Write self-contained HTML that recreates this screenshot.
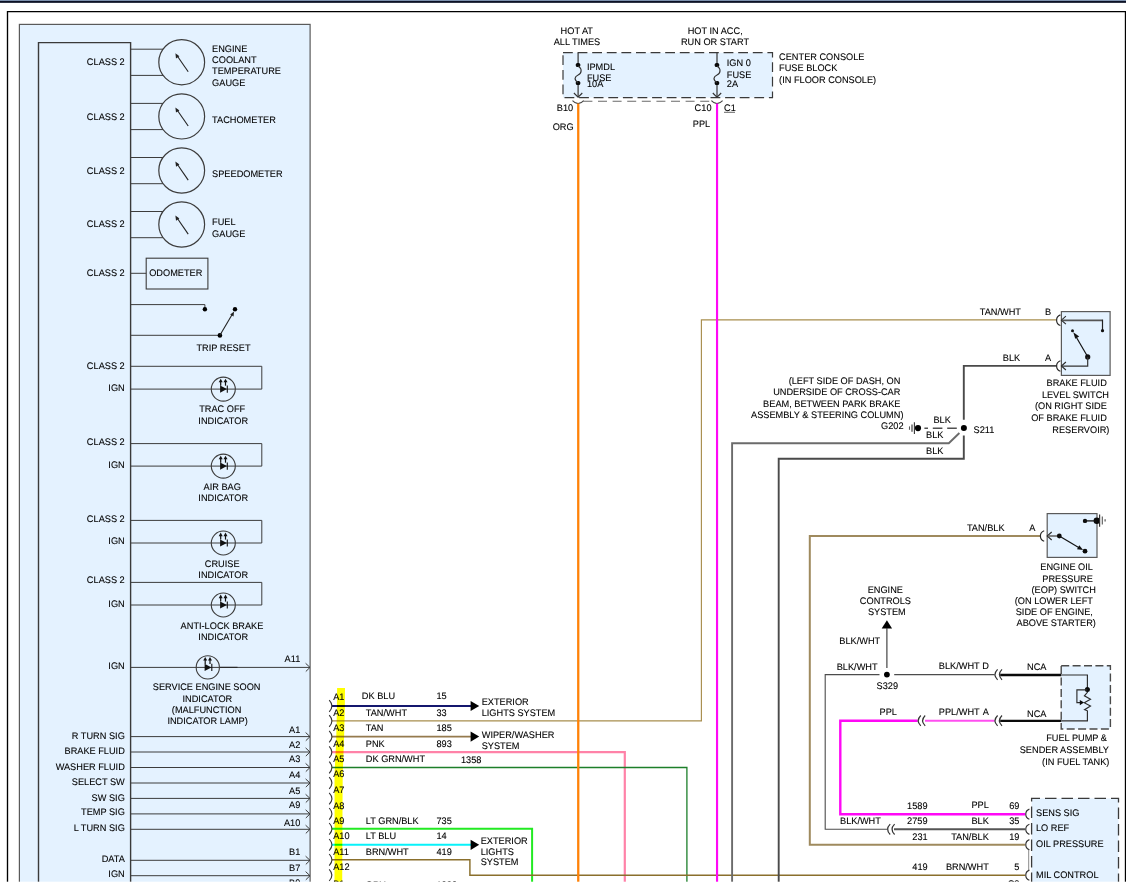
<!DOCTYPE html>
<html lang="en">
<head>
<meta charset="utf-8">
<title>Instrument Cluster Wiring Diagram</title>
<style>
html,body{margin:0;padding:0;background:#fff;}
body{width:1126px;height:884px;overflow:hidden;position:relative;}
svg{display:block;position:absolute;left:0;top:0;}
text{text-rendering:geometricPrecision;font-family:"Liberation Sans",sans-serif;font-size:9.5px;fill:#000;stroke:#000;stroke-width:0.1px;}
</style>
</head>
<body>
<svg width="1126" height="884" viewBox="0 0 1126 884">

<rect x="0" y="0" width="1126" height="884" fill="#fff"/>
<rect x="0" y="0" width="1126" height="1" fill="#7d91ae"/>
<rect x="0" y="1" width="1126" height="1.85" fill="#0c1226"/>
<path d="M7.5 884 V11.55 H1125.5 V884" stroke="#000" stroke-width="1.35" fill="none"/>
<rect x="19.4" y="24.4" width="290.7" height="870" fill="#e4f2ff" stroke="#5a5a5a" stroke-width="1.2"/>
<path d="M38.5 884 V42.6 H130.6 V884" stroke="#3a3a3a" stroke-width="1.4" fill="none"/>
<line x1="130.6" y1="49.2" x2="163.0" y2="49.2" stroke="#3c3c3c" stroke-width="1"/>
<line x1="130.6" y1="75.4" x2="163.0" y2="75.4" stroke="#3c3c3c" stroke-width="1"/>
<ellipse cx="181.7" cy="62.2" rx="22.9" ry="22.6" fill="none" stroke="#3c3c3c" stroke-width="1.2"/>
<line x1="188.2" y1="71.8" x2="176.59999999999997" y2="55.0" stroke="#222" stroke-width="1.1"/>
<polygon points="175.39999999999998,53.2 176.0,58.4 179.4,56.3" fill="#222"/>
<line x1="130.6" y1="103.4" x2="163.0" y2="103.4" stroke="#3c3c3c" stroke-width="1"/>
<line x1="130.6" y1="129.6" x2="163.0" y2="129.6" stroke="#3c3c3c" stroke-width="1"/>
<ellipse cx="181.7" cy="116.4" rx="22.9" ry="22.6" fill="none" stroke="#3c3c3c" stroke-width="1.2"/>
<line x1="188.2" y1="126.0" x2="176.59999999999997" y2="109.2" stroke="#222" stroke-width="1.1"/>
<polygon points="175.39999999999998,107.4 176.0,112.6 179.4,110.5" fill="#222"/>
<line x1="130.6" y1="157.5" x2="163.0" y2="157.5" stroke="#3c3c3c" stroke-width="1"/>
<line x1="130.6" y1="183.7" x2="163.0" y2="183.7" stroke="#3c3c3c" stroke-width="1"/>
<ellipse cx="181.7" cy="170.5" rx="22.9" ry="22.6" fill="none" stroke="#3c3c3c" stroke-width="1.2"/>
<line x1="188.2" y1="180.1" x2="176.59999999999997" y2="163.3" stroke="#222" stroke-width="1.1"/>
<polygon points="175.39999999999998,161.5 176.0,166.7 179.4,164.6" fill="#222"/>
<line x1="130.6" y1="211.5" x2="163.0" y2="211.5" stroke="#3c3c3c" stroke-width="1"/>
<line x1="130.6" y1="237.7" x2="163.0" y2="237.7" stroke="#3c3c3c" stroke-width="1"/>
<ellipse cx="181.7" cy="224.5" rx="22.9" ry="22.6" fill="none" stroke="#3c3c3c" stroke-width="1.2"/>
<line x1="188.2" y1="234.1" x2="176.59999999999997" y2="217.3" stroke="#222" stroke-width="1.1"/>
<polygon points="175.39999999999998,215.5 176.0,220.7 179.4,218.6" fill="#222"/>
<text transform="translate(124.7 64.8) scale(0.968 1)" text-anchor="end">CLASS 2</text>
<text transform="translate(124.7 119.6) scale(0.968 1)" text-anchor="end">CLASS 2</text>
<text transform="translate(124.7 173.9) scale(0.968 1)" text-anchor="end">CLASS 2</text>
<text transform="translate(124.7 226.6) scale(0.968 1)" text-anchor="end">CLASS 2</text>
<text transform="translate(124.7 276.1) scale(0.968 1)" text-anchor="end">CLASS 2</text>
<text transform="translate(124.7 368.9) scale(0.968 1)" text-anchor="end">CLASS 2</text>
<text transform="translate(124.7 444.6) scale(0.968 1)" text-anchor="end">CLASS 2</text>
<text transform="translate(124.7 521.6) scale(0.968 1)" text-anchor="end">CLASS 2</text>
<text transform="translate(124.7 582.9) scale(0.968 1)" text-anchor="end">CLASS 2</text>
<text transform="translate(124.7 391.1) scale(0.968 1)" text-anchor="end">IGN</text>
<text transform="translate(124.7 467.9) scale(0.968 1)" text-anchor="end">IGN</text>
<text transform="translate(124.7 543.8) scale(0.968 1)" text-anchor="end">IGN</text>
<text transform="translate(124.7 606.8) scale(0.968 1)" text-anchor="end">IGN</text>
<text transform="translate(124.7 668.7) scale(0.968 1)" text-anchor="end">IGN</text>
<text transform="translate(124.7 876.8) scale(0.968 1)" text-anchor="end">IGN</text>
<text transform="translate(212.1 51.8) scale(0.968 1)">ENGINE</text>
<text transform="translate(212.1 62.7) scale(0.968 1)">COOLANT</text>
<text transform="translate(212.1 73.7) scale(0.968 1)">TEMPERATURE</text>
<text transform="translate(212.1 85.7) scale(0.968 1)">GAUGE</text>
<text transform="translate(212.1 122.8) scale(0.968 1)">TACHOMETER</text>
<text transform="translate(212.1 176.8) scale(0.968 1)">SPEEDOMETER</text>
<text transform="translate(212.1 224.9) scale(0.968 1)">FUEL</text>
<text transform="translate(212.1 236.8) scale(0.968 1)">GAUGE</text>
<line x1="130.6" y1="273.3" x2="146.2" y2="273.3" stroke="#3c3c3c" stroke-width="1"/>
<rect x="146.2" y="258.2" width="61.7" height="30.8" fill="none" stroke="#3c3c3c" stroke-width="1.1"/>
<text transform="translate(149.2 276.1) scale(0.968 1)">ODOMETER</text>
<path d="M130.6 304.6 H204.9 V309" stroke="#3c3c3c" stroke-width="1" fill="none"/>
<circle cx="204.9" cy="309.3" r="2.2" fill="#000"/>
<circle cx="235.0" cy="309.3" r="2.2" fill="#000"/>
<line x1="130.6" y1="335.3" x2="219.9" y2="335.3" stroke="#3c3c3c" stroke-width="1"/>
<circle cx="219.9" cy="335.4" r="2.3" fill="#000"/>
<line x1="219.9" y1="335.3" x2="232.6" y2="313.8" stroke="#222" stroke-width="1.1"/>
<polygon points="234.0,311.4 233.6,316.6 230.2,314.6" fill="#222"/>
<text transform="translate(223.5 350.8) scale(0.968 1)" text-anchor="middle">TRIP RESET</text>
<path d="M130.6 366.3 H261.8 V389.1 H130.6" stroke="#3c3c3c" stroke-width="1" fill="none"/>
<circle cx="223.3" cy="389.1" r="12" fill="none" stroke="#3c3c3c" stroke-width="1.1"/>
<polygon points="220.1,385.5 220.1,392.7 226.9,389.1" fill="#111"/>
<line x1="227.3" y1="385.5" x2="227.3" y2="392.70000000000005" stroke="#111" stroke-width="1.1"/>
<line x1="220.70000000000002" y1="385.70000000000005" x2="220.70000000000002" y2="381.1" stroke="#111" stroke-width="1.2"/>
<polygon points="220.7,378.7 218.7,382.3 222.7,382.3" fill="#111"/>
<line x1="225.5" y1="385.70000000000005" x2="225.5" y2="381.1" stroke="#111" stroke-width="1.2"/>
<polygon points="225.5,378.7 223.5,382.3 227.5,382.3" fill="#111"/>
<path d="M130.6 443.6 H261.8 V466.1 H130.6" stroke="#3c3c3c" stroke-width="1" fill="none"/>
<circle cx="223.3" cy="466.1" r="12" fill="none" stroke="#3c3c3c" stroke-width="1.1"/>
<polygon points="220.1,462.5 220.1,469.7 226.9,466.1" fill="#111"/>
<line x1="227.3" y1="462.5" x2="227.3" y2="469.70000000000005" stroke="#111" stroke-width="1.1"/>
<line x1="220.70000000000002" y1="462.70000000000005" x2="220.70000000000002" y2="458.1" stroke="#111" stroke-width="1.2"/>
<polygon points="220.7,455.7 218.7,459.3 222.7,459.3" fill="#111"/>
<line x1="225.5" y1="462.70000000000005" x2="225.5" y2="458.1" stroke="#111" stroke-width="1.2"/>
<polygon points="225.5,455.7 223.5,459.3 227.5,459.3" fill="#111"/>
<path d="M130.6 520.4 H261.8 V543.0 H130.6" stroke="#3c3c3c" stroke-width="1" fill="none"/>
<circle cx="223.3" cy="543.0" r="12" fill="none" stroke="#3c3c3c" stroke-width="1.1"/>
<polygon points="220.1,539.4 220.1,546.6 226.9,543.0" fill="#111"/>
<line x1="227.3" y1="539.4" x2="227.3" y2="546.6" stroke="#111" stroke-width="1.1"/>
<line x1="220.70000000000002" y1="539.6" x2="220.70000000000002" y2="535.0" stroke="#111" stroke-width="1.2"/>
<polygon points="220.7,532.6 218.7,536.2 222.7,536.2" fill="#111"/>
<line x1="225.5" y1="539.6" x2="225.5" y2="535.0" stroke="#111" stroke-width="1.2"/>
<polygon points="225.5,532.6 223.5,536.2 227.5,536.2" fill="#111"/>
<path d="M130.6 582.4 H261.8 V605.0 H130.6" stroke="#3c3c3c" stroke-width="1" fill="none"/>
<circle cx="223.3" cy="605.0" r="12" fill="none" stroke="#3c3c3c" stroke-width="1.1"/>
<polygon points="220.1,601.4 220.1,608.6 226.9,605.0" fill="#111"/>
<line x1="227.3" y1="601.4" x2="227.3" y2="608.6" stroke="#111" stroke-width="1.1"/>
<line x1="220.70000000000002" y1="601.6" x2="220.70000000000002" y2="597.0" stroke="#111" stroke-width="1.2"/>
<polygon points="220.7,594.6 218.7,598.2 222.7,598.2" fill="#111"/>
<line x1="225.5" y1="601.6" x2="225.5" y2="597.0" stroke="#111" stroke-width="1.2"/>
<polygon points="225.5,594.6 223.5,598.2 227.5,598.2" fill="#111"/>
<text transform="translate(222.2 411.6) scale(0.968 1)" text-anchor="middle">TRAC OFF</text>
<text transform="translate(223.2 423.7) scale(0.968 1)" text-anchor="middle">INDICATOR</text>
<text transform="translate(222.2 489.8) scale(0.968 1)" text-anchor="middle">AIR BAG</text>
<text transform="translate(223.2 500.7) scale(0.968 1)" text-anchor="middle">INDICATOR</text>
<text transform="translate(222.2 566.7) scale(0.968 1)" text-anchor="middle">CRUISE</text>
<text transform="translate(223.2 577.6) scale(0.968 1)" text-anchor="middle">INDICATOR</text>
<text transform="translate(222.0 628.9) scale(0.968 1)" text-anchor="middle">ANTI-LOCK BRAKE</text>
<text transform="translate(223.2 639.8) scale(0.968 1)" text-anchor="middle">INDICATOR</text>
<line x1="130.6" y1="667.4" x2="310" y2="667.4" stroke="#3c3c3c" stroke-width="1"/>
<path d="M305.6 663.3 L310 667.4 L305.8 671.5" stroke="#3c3c3c" stroke-width="1" fill="none"/>
<text transform="translate(300.3 661.6) scale(0.968 1)" text-anchor="end">A11</text>
<line x1="220" y1="667.4" x2="237.5" y2="667.4" stroke="#2a2a2a" stroke-width="1.2"/>
<circle cx="207.8" cy="667.4" r="11.6" fill="none" stroke="#3c3c3c" stroke-width="1.1"/>
<polygon points="204.6,663.8 204.6,671.0 211.4,667.4" fill="#111"/>
<line x1="211.8" y1="663.8" x2="211.8" y2="671.0" stroke="#111" stroke-width="1.1"/>
<line x1="205.20000000000002" y1="664.0" x2="205.20000000000002" y2="659.4" stroke="#111" stroke-width="1.2"/>
<polygon points="205.2,657.0 203.2,660.6 207.2,660.6" fill="#111"/>
<line x1="210.0" y1="664.0" x2="210.0" y2="659.4" stroke="#111" stroke-width="1.2"/>
<polygon points="210.0,657.0 208.0,660.6 212.0,660.6" fill="#111"/>
<text transform="translate(206.6 689.7) scale(0.968 1)" text-anchor="middle">SERVICE ENGINE SOON</text>
<text transform="translate(207.4 702.0) scale(0.968 1)" text-anchor="middle">INDICATOR</text>
<text transform="translate(206.6 713.0) scale(0.968 1)" text-anchor="middle">(MALFUNCTION</text>
<text transform="translate(207.6 724.1) scale(0.968 1)" text-anchor="middle">INDICATOR LAMP)</text>
<line x1="130.6" y1="736.6" x2="310" y2="736.6" stroke="#3c3c3c" stroke-width="1"/>
<path d="M305.6 732.5 L310 736.6 L305.8 740.7" stroke="#3c3c3c" stroke-width="1" fill="none"/>
<text transform="translate(300.3 733.3) scale(0.968 1)" text-anchor="end">A1</text>
<text transform="translate(124.8 738.5) scale(0.968 1)" text-anchor="end">R TURN SIG</text>
<line x1="130.6" y1="752.0" x2="310" y2="752.0" stroke="#3c3c3c" stroke-width="1"/>
<path d="M305.6 747.9 L310 752.0 L305.8 756.1" stroke="#3c3c3c" stroke-width="1" fill="none"/>
<text transform="translate(300.3 747.7) scale(0.968 1)" text-anchor="end">A2</text>
<text transform="translate(124.8 753.8) scale(0.968 1)" text-anchor="end">BRAKE FLUID</text>
<line x1="130.6" y1="767.5" x2="310" y2="767.5" stroke="#3c3c3c" stroke-width="1"/>
<path d="M305.6 763.4 L310 767.5 L305.8 771.6" stroke="#3c3c3c" stroke-width="1" fill="none"/>
<text transform="translate(300.3 762.4) scale(0.968 1)" text-anchor="end">A3</text>
<text transform="translate(124.8 769.7) scale(0.968 1)" text-anchor="end">WASHER FLUID</text>
<line x1="130.6" y1="783.0" x2="310" y2="783.0" stroke="#3c3c3c" stroke-width="1"/>
<path d="M305.6 778.9 L310 783.0 L305.8 787.1" stroke="#3c3c3c" stroke-width="1" fill="none"/>
<text transform="translate(300.3 778.0) scale(0.968 1)" text-anchor="end">A4</text>
<text transform="translate(124.8 784.9) scale(0.968 1)" text-anchor="end">SELECT SW</text>
<line x1="130.6" y1="798.4" x2="310" y2="798.4" stroke="#3c3c3c" stroke-width="1"/>
<path d="M305.6 794.3 L310 798.4 L305.8 802.5" stroke="#3c3c3c" stroke-width="1" fill="none"/>
<text transform="translate(300.3 794.0) scale(0.968 1)" text-anchor="end">A5</text>
<text transform="translate(124.8 800.6) scale(0.968 1)" text-anchor="end">SW SIG</text>
<line x1="130.6" y1="813.9" x2="310" y2="813.9" stroke="#3c3c3c" stroke-width="1"/>
<path d="M305.6 809.8 L310 813.9 L305.8 818.0" stroke="#3c3c3c" stroke-width="1" fill="none"/>
<text transform="translate(300.3 808.4) scale(0.968 1)" text-anchor="end">A9</text>
<text transform="translate(124.8 814.8) scale(0.968 1)" text-anchor="end">TEMP SIG</text>
<line x1="130.6" y1="829.3" x2="310" y2="829.3" stroke="#3c3c3c" stroke-width="1"/>
<path d="M305.6 825.1999999999999 L310 829.3 L305.8 833.4" stroke="#3c3c3c" stroke-width="1" fill="none"/>
<text transform="translate(300.3 825.5) scale(0.968 1)" text-anchor="end">A10</text>
<text transform="translate(124.8 831.0) scale(0.968 1)" text-anchor="end">L TURN SIG</text>
<line x1="130.6" y1="860.3" x2="310" y2="860.3" stroke="#3c3c3c" stroke-width="1"/>
<path d="M305.6 856.1999999999999 L310 860.3 L305.8 864.4" stroke="#3c3c3c" stroke-width="1" fill="none"/>
<text transform="translate(300.3 854.7) scale(0.968 1)" text-anchor="end">B1</text>
<text transform="translate(124.8 861.6) scale(0.968 1)" text-anchor="end">DATA</text>
<line x1="130.6" y1="875.7" x2="310" y2="875.7" stroke="#3c3c3c" stroke-width="1"/>
<path d="M305.6 871.6 L310 875.7 L305.8 879.8000000000001" stroke="#3c3c3c" stroke-width="1" fill="none"/>
<text transform="translate(300.3 870.5) scale(0.968 1)" text-anchor="end">B7</text>
<text transform="translate(300.3 886.4) scale(0.968 1)" text-anchor="end">B9</text>
<rect x="563" y="52.7" width="209.5" height="44.9" fill="#e4f2ff"/>
<rect x="563" y="52.7" width="209.5" height="44.9" fill="none" stroke="#3a3a3a" stroke-width="1.2" stroke-dasharray="9.8 4.8"/>
<line x1="583.4" y1="101.3" x2="711.6" y2="101.3" stroke="#6a6a6a" stroke-width="1.1" stroke-dasharray="9 5.6"/>
<text transform="translate(576.8 33.5) scale(0.968 1)" text-anchor="middle">HOT AT</text>
<text transform="translate(576.9 44.9) scale(0.968 1)" text-anchor="middle">ALL TIMES</text>
<text transform="translate(715.2 33.5) scale(0.968 1)" text-anchor="middle">HOT IN ACC,</text>
<text transform="translate(715.0 44.9) scale(0.968 1)" text-anchor="middle">RUN OR START</text>
<text transform="translate(779.1 59.7) scale(0.968 1)">CENTER CONSOLE</text>
<text transform="translate(779.1 70.5) scale(0.968 1)">FUSE BLOCK</text>
<text transform="translate(779.1 82.9) scale(0.968 1)">(IN FLOOR CONSOLE)</text>
<line x1="578.1" y1="52.7" x2="578.1" y2="65" stroke="#333" stroke-width="1.2"/>
<line x1="578.1" y1="83" x2="578.1" y2="97" stroke="#333" stroke-width="1.2"/>
<rect x="575.8" y="62.9" width="4.5" height="4.2" rx="1.6" fill="#0a0a0a"/>
<rect x="575.8" y="80.9" width="4.5" height="4.2" rx="1.6" fill="#0a0a0a"/>
<path d="M578.1 66 C582.6 69,581.6 73.5,578.1 75 C574.6 76.5,573.6 80,578.1 82.5" stroke="#333" stroke-width="1.2" fill="none"/>
<path d="M573.9 93.0 L578.1 97.2 L582.3 93.0" stroke="#333" stroke-width="1.1" fill="none"/>
<path d="M572.5 100.6 Q578.1 106.6 583.7 100.6" stroke="#444" stroke-width="1.1" fill="none"/>
<line x1="717.0" y1="52.7" x2="717.0" y2="65" stroke="#333" stroke-width="1.2"/>
<line x1="717.0" y1="83" x2="717.0" y2="97" stroke="#333" stroke-width="1.2"/>
<rect x="714.7" y="62.9" width="4.5" height="4.2" rx="1.6" fill="#0a0a0a"/>
<rect x="714.7" y="80.9" width="4.5" height="4.2" rx="1.6" fill="#0a0a0a"/>
<path d="M717.0 66 C721.5 69,720.5 73.5,717.0 75 C713.5 76.5,712.5 80,717.0 82.5" stroke="#333" stroke-width="1.2" fill="none"/>
<path d="M712.8 93.0 L717.0 97.2 L721.2 93.0" stroke="#333" stroke-width="1.1" fill="none"/>
<path d="M711.4 100.6 Q717.0 106.6 722.6 100.6" stroke="#444" stroke-width="1.1" fill="none"/>
<text transform="translate(586.9 70.0) scale(0.968 1)">IPMDL</text>
<text transform="translate(586.9 81.2) scale(0.968 1)">FUSE</text>
<text transform="translate(586.9 86.9) scale(0.968 1)">10A</text>
<text transform="translate(726.8 65.6) scale(0.968 1)">IGN 0</text>
<text transform="translate(726.8 77.5) scale(0.968 1)">FUSE</text>
<text transform="translate(726.8 86.6) scale(0.968 1)">2A</text>
<text transform="translate(573.2 111.0) scale(0.968 1)" text-anchor="end">B10</text>
<text transform="translate(573.6 129.6) scale(0.968 1)" text-anchor="end">ORG</text>
<text transform="translate(711.5 111.0) scale(0.968 1)" text-anchor="end">C10</text>
<text transform="translate(724.0 110.5) scale(0.968 1)">C1</text>
<line x1="724.0" y1="112.3" x2="735.0" y2="112.3" stroke="#555" stroke-width="0.9"/>
<text transform="translate(710.2 126.8) scale(0.968 1)" text-anchor="end">PPL</text>
<path d="M331.8 720.8 H701.4 V319.8 H1056.6" stroke="#a88e4e" stroke-width="1.15" fill="none"/>
<path d="M331.8 752.1 H624.8 V884" stroke="#ff82a8" stroke-width="2.2" fill="none"/>
<path d="M331.8 767.5 H686.9 V884" stroke="#1d7f2a" stroke-width="1.3" fill="none"/>
<path d="M331.8 828.8 H532.1 V884" stroke="#22ea22" stroke-width="2.0" fill="none"/>
<path d="M331.8 859.8 H469.9 V875.2 H1025.2" stroke="#8a6f2c" stroke-width="1.45" fill="none"/>
<line x1="331.8" y1="706.0" x2="472" y2="706.0" stroke="#14176e" stroke-width="2.0"/>
<polygon points="470.6,700.9 479.2,706.0 470.6,711.1" fill="#000"/>
<line x1="331.8" y1="736.6" x2="472" y2="736.6" stroke="#957a4e" stroke-width="1.9"/>
<polygon points="470.6,731.5 479.2,736.6 470.6,741.7" fill="#000"/>
<line x1="331.8" y1="844.8" x2="472" y2="844.8" stroke="#08f2fa" stroke-width="2.0"/>
<polygon points="470.6,839.7 479.2,844.8 470.6,849.9" fill="#000"/>
<line x1="578.25" y1="103.6" x2="578.25" y2="884" stroke="#ff8208" stroke-width="2.3"/>
<line x1="717.05" y1="103.6" x2="717.05" y2="884" stroke="#ff08f6" stroke-width="2.15"/>
<path d="M959.4 433.0 L948.8 443.3 H732.1 V884" stroke="#6b6b6b" stroke-width="1.9" fill="none"/>
<path d="M1056.6 365.9 H963.8 V419.8 M963.8 435.4 V458.8 H778.7 V884" stroke="#4a4a4a" stroke-width="1.9" fill="none"/>
<path d="M1040.6 536.0 H809.8 V844.7 H1025.2" stroke="#9f8a5e" stroke-width="2.0" fill="none"/>
<path d="M879.5 674.6 H825.2 V829.3 H887" stroke="#4c4c4c" stroke-width="1.1" fill="none"/>
<line x1="894" y1="829.3" x2="1025.2" y2="829.3" stroke="#555" stroke-width="2.0"/>
<line x1="894.2" y1="674.6" x2="994.6" y2="674.6" stroke="#4c4c4c" stroke-width="1.1"/>
<path d="M917.6 720.7 H840.3 V814.2 H1025.2" stroke="#ff08f6" stroke-width="2.4" fill="none"/>
<line x1="925" y1="720.7" x2="994.6" y2="720.7" stroke="#ff4ff0" stroke-width="1.9"/>
<polygon points="337.1,688 345.0,688 344.8,710 344.0,740 342.7,775 342.4,830 342.2,884 334.5,884 334.6,830 334.5,775 336.2,740 336.9,710" fill="#ffff00" style="mix-blend-mode:multiply"/>
<path d="M329.2 700.2 Q334.6 706.0 329.2 711.8" stroke="#333" stroke-width="1.1" fill="none"/>
<text transform="translate(333.2 699.5) scale(0.968 1)">A1</text>
<path d="M329.2 715.2 Q334.6 721.0 329.2 726.8" stroke="#333" stroke-width="1.1" fill="none"/>
<text transform="translate(333.2 716.0) scale(0.968 1)">A2</text>
<path d="M329.2 730.8 Q334.6 736.6 329.2 742.4" stroke="#333" stroke-width="1.1" fill="none"/>
<text transform="translate(333.2 731.0) scale(0.968 1)">A3</text>
<path d="M329.2 746.3 Q334.6 752.1 329.2 757.9" stroke="#333" stroke-width="1.1" fill="none"/>
<text transform="translate(333.2 746.7) scale(0.968 1)">A4</text>
<path d="M329.2 761.7 Q334.6 767.5 329.2 773.3" stroke="#333" stroke-width="1.1" fill="none"/>
<text transform="translate(333.2 761.6) scale(0.968 1)">A5</text>
<path d="M329.2 777.2 Q334.6 783.0 329.2 788.8" stroke="#333" stroke-width="1.1" fill="none"/>
<text transform="translate(333.2 777.4) scale(0.968 1)">A6</text>
<path d="M329.2 792.8 Q334.6 798.6 329.2 804.4" stroke="#333" stroke-width="1.1" fill="none"/>
<text transform="translate(333.2 792.7) scale(0.968 1)">A7</text>
<path d="M329.2 808.0 Q334.6 813.8 329.2 819.6" stroke="#333" stroke-width="1.1" fill="none"/>
<text transform="translate(333.2 808.5) scale(0.968 1)">A8</text>
<path d="M329.2 823.0 Q334.6 828.8 329.2 834.6" stroke="#333" stroke-width="1.1" fill="none"/>
<text transform="translate(333.2 823.7) scale(0.968 1)">A9</text>
<path d="M329.2 839.0 Q334.6 844.8 329.2 850.6" stroke="#333" stroke-width="1.1" fill="none"/>
<text transform="translate(333.2 838.7) scale(0.968 1)">A10</text>
<path d="M329.2 854.0 Q334.6 859.8 329.2 865.6" stroke="#333" stroke-width="1.1" fill="none"/>
<text transform="translate(333.2 855.3) scale(0.968 1)">A11</text>
<path d="M329.2 869.4 Q334.6 875.2 329.2 881.0" stroke="#333" stroke-width="1.1" fill="none"/>
<text transform="translate(333.2 870.2) scale(0.968 1)">A12</text>
<text transform="translate(333.2 887.2) scale(0.968 1)">B1</text>
<text transform="translate(361.8 698.7) scale(0.968 1)">DK BLU</text>
<text transform="translate(436.4 699.4) scale(0.968 1)">15</text>
<text transform="translate(365.8 716.0) scale(0.968 1)">TAN/WHT</text>
<text transform="translate(436.4 716.0) scale(0.968 1)">33</text>
<text transform="translate(365.8 731.0) scale(0.968 1)">TAN</text>
<text transform="translate(436.4 731.0) scale(0.968 1)">185</text>
<text transform="translate(365.8 746.7) scale(0.968 1)">PNK</text>
<text transform="translate(436.4 746.7) scale(0.968 1)">893</text>
<text transform="translate(365.8 761.6) scale(0.968 1)">DK GRN/WHT</text>
<text transform="translate(461.0 762.6) scale(0.968 1)">1358</text>
<text transform="translate(365.8 823.7) scale(0.968 1)">LT GRN/BLK</text>
<text transform="translate(436.4 823.7) scale(0.968 1)">735</text>
<text transform="translate(365.8 838.7) scale(0.968 1)">LT BLU</text>
<text transform="translate(436.4 838.7) scale(0.968 1)">14</text>
<text transform="translate(365.8 855.3) scale(0.968 1)">BRN/WHT</text>
<text transform="translate(436.4 855.3) scale(0.968 1)">419</text>
<text transform="translate(365.8 887.6) scale(0.968 1)">GRY</text>
<text transform="translate(436.4 887.6) scale(0.968 1)">1036</text>
<text transform="translate(481.7 704.9) scale(0.968 1)">EXTERIOR</text>
<text transform="translate(481.7 716.0) scale(0.968 1)">LIGHTS SYSTEM</text>
<text transform="translate(481.7 737.7) scale(0.968 1)">WIPER/WASHER</text>
<text transform="translate(481.7 748.6) scale(0.968 1)">SYSTEM</text>
<text transform="translate(480.7 844.2) scale(0.968 1)">EXTERIOR</text>
<text transform="translate(480.7 855.3) scale(0.968 1)">LIGHTS</text>
<text transform="translate(480.7 865.3) scale(0.968 1)">SYSTEM</text>
<rect x="1061.4" y="311.6" width="48.7" height="63.8" fill="#e4f2ff" stroke="#5a5a5a" stroke-width="1.2"/>
<path d="M1060.4 314.9 A5.6 5.6 0 0 0 1060.4 325.5" stroke="#2a2a2a" stroke-width="1.2" fill="none"/>
<path d="M1065.9 316.2 L1061.4 320.2 L1065.9 324.2" stroke="#2a2a2a" stroke-width="1.1" fill="none"/>
<path d="M1060.4 360.7 A5.6 5.6 0 0 0 1060.4 371.3" stroke="#2a2a2a" stroke-width="1.2" fill="none"/>
<path d="M1065.9 362.0 L1061.4 366.0 L1065.9 370.0" stroke="#2a2a2a" stroke-width="1.1" fill="none"/>
<path d="M1062 320.3 H1102.5" stroke="#555" stroke-width="1.7" fill="none"/>
<line x1="1102.5" y1="319.6" x2="1102.5" y2="330" stroke="#222" stroke-width="1.2"/>
<circle cx="1102.5" cy="330.7" r="1.6" fill="#111"/>
<circle cx="1072.5" cy="330.7" r="1.5" fill="#111"/>
<circle cx="1087.7" cy="356.9" r="2.6" fill="#111"/>
<path d="M1062 366.1 H1087.7 V357" stroke="#333" stroke-width="1.2" fill="none"/>
<line x1="1087.7" y1="356.7" x2="1075.6" y2="336.0" stroke="#111" stroke-width="1.2"/>
<polygon points="1073.3,332.2 1079.2,336.4 1075.2,338.8" fill="#111"/>
<text transform="translate(979.7 314.7) scale(0.968 1)">TAN/WHT</text>
<text transform="translate(1045.0 314.7) scale(0.968 1)">B</text>
<text transform="translate(1002.8 360.6) scale(0.968 1)">BLK</text>
<text transform="translate(1045.0 360.6) scale(0.968 1)">A</text>
<text transform="translate(1106.8 385.8) scale(0.968 1)" text-anchor="end">BRAKE FLUID</text>
<text transform="translate(1109.0 398.0) scale(0.968 1)" text-anchor="end">LEVEL SWITCH</text>
<text transform="translate(1106.8 409.3) scale(0.968 1)" text-anchor="end">(ON RIGHT SIDE</text>
<text transform="translate(1106.8 421.0) scale(0.968 1)" text-anchor="end">OF BRAKE FLUID</text>
<text transform="translate(1109.4 432.9) scale(0.968 1)" text-anchor="end">RESERVOIR)</text>
<circle cx="963.9" cy="428.1" r="3.0" fill="#000"/>
<text transform="translate(973.6 432.9) scale(0.968 1)">S211</text>
<line x1="924.4" y1="428.2" x2="956.8" y2="428.2" stroke="#505050" stroke-width="1.6" stroke-dasharray="3.6 4.8 9.6 4.8 9.6 4.8"/>
<circle cx="918.0" cy="428.1" r="3.1" fill="#000"/>
<line x1="914.4" y1="422.2" x2="914.4" y2="434.0" stroke="#333" stroke-width="1.1"/>
<line x1="912.0" y1="424.4" x2="912.0" y2="431.8" stroke="#777" stroke-width="1.7"/>
<line x1="909.5" y1="426.4" x2="909.5" y2="429.8" stroke="#555" stroke-width="1.1"/>
<text transform="translate(933.4 422.8) scale(0.968 1)">BLK</text>
<text transform="translate(926.0 437.7) scale(0.968 1)">BLK</text>
<text transform="translate(926.0 454.0) scale(0.968 1)">BLK</text>
<text transform="translate(900.4 383.7) scale(0.968 1)" text-anchor="end">(LEFT SIDE OF DASH, ON</text>
<text transform="translate(900.4 394.9) scale(0.968 1)" text-anchor="end">UNDERSIDE OF CROSS-CAR</text>
<text transform="translate(900.4 406.8) scale(0.968 1)" text-anchor="end">BEAM, BETWEEN PARK BRAKE</text>
<text transform="translate(903.5 417.8) scale(0.968 1)" text-anchor="end">ASSEMBLY &amp; STEERING COLUMN)</text>
<text transform="translate(903.5 428.9) scale(0.968 1)" text-anchor="end">G202</text>
<rect x="1047.2" y="513.6" width="49.8" height="43.8" fill="#e4f2ff" stroke="#5a5a5a" stroke-width="1.2"/>
<path d="M1044.2 530.7 A5.6 5.6 0 0 0 1044.2 541.3" stroke="#2a2a2a" stroke-width="1.2" fill="none"/>
<path d="M1051.7 532.0 L1047.2 536.0 L1051.7 540.0" stroke="#2a2a2a" stroke-width="1.1" fill="none"/>
<line x1="1048.0" y1="536.0" x2="1058.9" y2="536.0" stroke="#666" stroke-width="1.6"/>
<circle cx="1059.3" cy="536.0" r="2.4" fill="#0a0a0a"/>
<circle cx="1085.0" cy="551.2" r="2.4" fill="#0a0a0a"/>
<line x1="1059.3" y1="536.0" x2="1079.5" y2="548.0" stroke="#111" stroke-width="1.2"/>
<polygon points="1083.1,550.1 1077.0,549.2 1079.3,545.3" fill="#111"/>
<circle cx="1085.0" cy="520.9" r="2.2" fill="#0a0a0a"/>
<circle cx="1096.8" cy="520.8" r="3.2" fill="#0a0a0a"/>
<line x1="1085.0" y1="520.9" x2="1096.7" y2="520.9" stroke="#111" stroke-width="1.3"/>
<line x1="1099.6" y1="514.6" x2="1099.6" y2="526.8" stroke="#333" stroke-width="1.2"/>
<line x1="1102.3" y1="516.6" x2="1102.3" y2="524.6" stroke="#555" stroke-width="1.1"/>
<line x1="1105.1" y1="519.2" x2="1105.1" y2="521.6" stroke="#555" stroke-width="1.2"/>
<text transform="translate(966.9 530.9) scale(0.968 1)">TAN/BLK</text>
<text transform="translate(1029.3 530.9) scale(0.968 1)">A</text>
<text transform="translate(1092.9 569.8) scale(0.968 1)" text-anchor="end">ENGINE OIL</text>
<text transform="translate(1092.9 581.5) scale(0.968 1)" text-anchor="end">PRESSURE</text>
<text transform="translate(1095.9 592.8) scale(0.968 1)" text-anchor="end">(EOP) SWITCH</text>
<text transform="translate(1092.9 603.6) scale(0.968 1)" text-anchor="end">(ON LOWER LEFT</text>
<text transform="translate(1092.9 614.9) scale(0.968 1)" text-anchor="end">SIDE OF ENGINE,</text>
<text transform="translate(1095.9 625.9) scale(0.968 1)" text-anchor="end">ABOVE STARTER)</text>
<text transform="translate(885.3 592.6) scale(0.968 1)" text-anchor="middle">ENGINE</text>
<text transform="translate(885.4 603.8) scale(0.968 1)" text-anchor="middle">CONTROLS</text>
<text transform="translate(886.8 614.7) scale(0.968 1)" text-anchor="middle">SYSTEM</text>
<polygon points="886.9,620.2 881.7,628.6 892.1,628.6" fill="#000"/>
<line x1="886.9" y1="628" x2="886.9" y2="668" stroke="#333" stroke-width="1.1"/>
<circle cx="886.9" cy="674.6" r="2.9" fill="#000"/>
<text transform="translate(839.3 643.7) scale(0.968 1)">BLK/WHT</text>
<text transform="translate(836.7 669.5) scale(0.968 1)">BLK/WHT</text>
<text transform="translate(938.8 668.6) scale(0.968 1)">BLK/WHT</text>
<text transform="translate(988.8 668.6) scale(0.968 1)" text-anchor="end">D</text>
<text transform="translate(876.6 688.6) scale(0.968 1)">S329</text>
<text transform="translate(879.6 715.3) scale(0.968 1)">PPL</text>
<text transform="translate(938.8 714.8) scale(0.968 1)">PPL/WHT</text>
<text transform="translate(988.8 714.8) scale(0.968 1)" text-anchor="end">A</text>
<path d="M920.8 715.5 Q915.6 720.7 920.8 725.9" stroke="#333" stroke-width="1.2" fill="none"/>
<path d="M925.2 715.5 Q920.0 720.7 925.2 725.9" stroke="#333" stroke-width="1.2" fill="none"/>
<path d="M997.6 669.4 Q992.4 674.6 997.6 679.8" stroke="#333" stroke-width="1.2" fill="none"/>
<path d="M1002.0 669.4 Q996.8 674.6 1002.0 679.8" stroke="#333" stroke-width="1.2" fill="none"/>
<path d="M997.6 715.5 Q992.4 720.7 997.6 725.9" stroke="#333" stroke-width="1.2" fill="none"/>
<path d="M1002.0 715.5 Q996.8 720.7 1002.0 725.9" stroke="#333" stroke-width="1.2" fill="none"/>
<path d="M890.2 824.1 Q885.0 829.3 890.2 834.5" stroke="#333" stroke-width="1.2" fill="none"/>
<path d="M894.6 824.1 Q889.4 829.3 894.6 834.5" stroke="#333" stroke-width="1.2" fill="none"/>
<rect x="1061.2" y="665.7" width="49.2" height="63.3" fill="#e4f2ff"/>
<rect x="1061.2" y="665.7" width="49.2" height="63.3" fill="none" stroke="#4a4a4a" stroke-width="1.4" stroke-dasharray="8 3.4"/>
<line x1="1000.2" y1="675.0" x2="1061.2" y2="675.0" stroke="#0a0a0a" stroke-width="2.4"/>
<line x1="1000.2" y1="720.9" x2="1061.2" y2="720.9" stroke="#0a0a0a" stroke-width="2.4"/>
<path d="M1061.2 675 H1087.4 V692.4 L1084.4 695.8 L1090.5 699.3 L1084.3 702.7 L1090.5 706.1 L1084.6 709.7 L1087.4 710.8 V720.9 H1061.2" stroke="#2c2c2c" stroke-width="1.15" fill="none"/>
<circle cx="1087.4" cy="689.4" r="2.5" fill="#0a0a0a"/>
<path d="M1087.3 689.9 H1076.9 V702.6 H1080.5" stroke="#2c2c2c" stroke-width="1.15" fill="none"/>
<polygon points="1084.0,702.6 1079.8,700.0 1079.8,705.2" fill="#0a0a0a"/>
<text transform="translate(1027.0 669.8) scale(0.968 1)">NCA</text>
<text transform="translate(1027.0 716.8) scale(0.968 1)">NCA</text>
<text transform="translate(1107.0 740.7) scale(0.968 1)" text-anchor="end">FUEL PUMP &amp;</text>
<text transform="translate(1109.0 752.5) scale(0.968 1)" text-anchor="end">SENDER ASSEMBLY</text>
<text transform="translate(1109.4 765.0) scale(0.968 1)" text-anchor="end">(IN FUEL TANK)</text>
<rect x="1031.6" y="798.4" width="86.9" height="100" fill="#e4f2ff"/>
<path d="M1031.6 884 V798.4 H1118.5 V884" fill="none" stroke="#3a3a3a" stroke-width="1.3" stroke-dasharray="11.5 5"/>
<line x1="1028.7" y1="849.5" x2="1028.7" y2="870.5" stroke="#8a8a8a" stroke-width="1.0"/>
<path d="M1029.4 809.1 A5.4 5.4 0 0 0 1029.4 819.3" stroke="#333" stroke-width="1.15" fill="none"/>
<path d="M1029.4 824.2 A5.4 5.4 0 0 0 1029.4 834.4" stroke="#333" stroke-width="1.15" fill="none"/>
<path d="M1029.4 839.6 A5.4 5.4 0 0 0 1029.4 849.8" stroke="#333" stroke-width="1.15" fill="none"/>
<path d="M1029.4 870.1 A5.4 5.4 0 0 0 1029.4 880.3" stroke="#333" stroke-width="1.15" fill="none"/>
<text transform="translate(907.1 809.1) scale(0.968 1)">1589</text>
<text transform="translate(988.8 808.3) scale(0.968 1)" text-anchor="end">PPL</text>
<text transform="translate(1019.5 809.1) scale(0.968 1)" text-anchor="end">69</text>
<text transform="translate(840.0 824.1) scale(0.968 1)">BLK/WHT</text>
<text transform="translate(907.1 824.1) scale(0.968 1)">2759</text>
<text transform="translate(988.8 824.1) scale(0.968 1)" text-anchor="end">BLK</text>
<text transform="translate(1019.5 824.1) scale(0.968 1)" text-anchor="end">35</text>
<text transform="translate(912.3 839.5) scale(0.968 1)">231</text>
<text transform="translate(988.8 839.5) scale(0.968 1)" text-anchor="end">TAN/BLK</text>
<text transform="translate(1019.5 839.5) scale(0.968 1)" text-anchor="end">19</text>
<text transform="translate(912.3 869.9) scale(0.968 1)">419</text>
<text transform="translate(988.8 869.9) scale(0.968 1)" text-anchor="end">BRN/WHT</text>
<text transform="translate(1019.5 869.9) scale(0.968 1)" text-anchor="end">5</text>
<text transform="translate(1019.5 886.6) scale(0.968 1)" text-anchor="end">C2</text>
<text transform="translate(1036.0 816.4) scale(0.968 1)">SENS SIG</text>
<text transform="translate(1036.0 831.4) scale(0.968 1)">LO REF</text>
<text transform="translate(1036.0 847.3) scale(0.968 1)">OIL PRESSURE</text>
<text transform="translate(1036.0 877.7) scale(0.968 1)">MIL CONTROL</text>
<rect x="0" y="881.7" width="1126" height="3" fill="#fff"/>
</svg>
</body>
</html>
